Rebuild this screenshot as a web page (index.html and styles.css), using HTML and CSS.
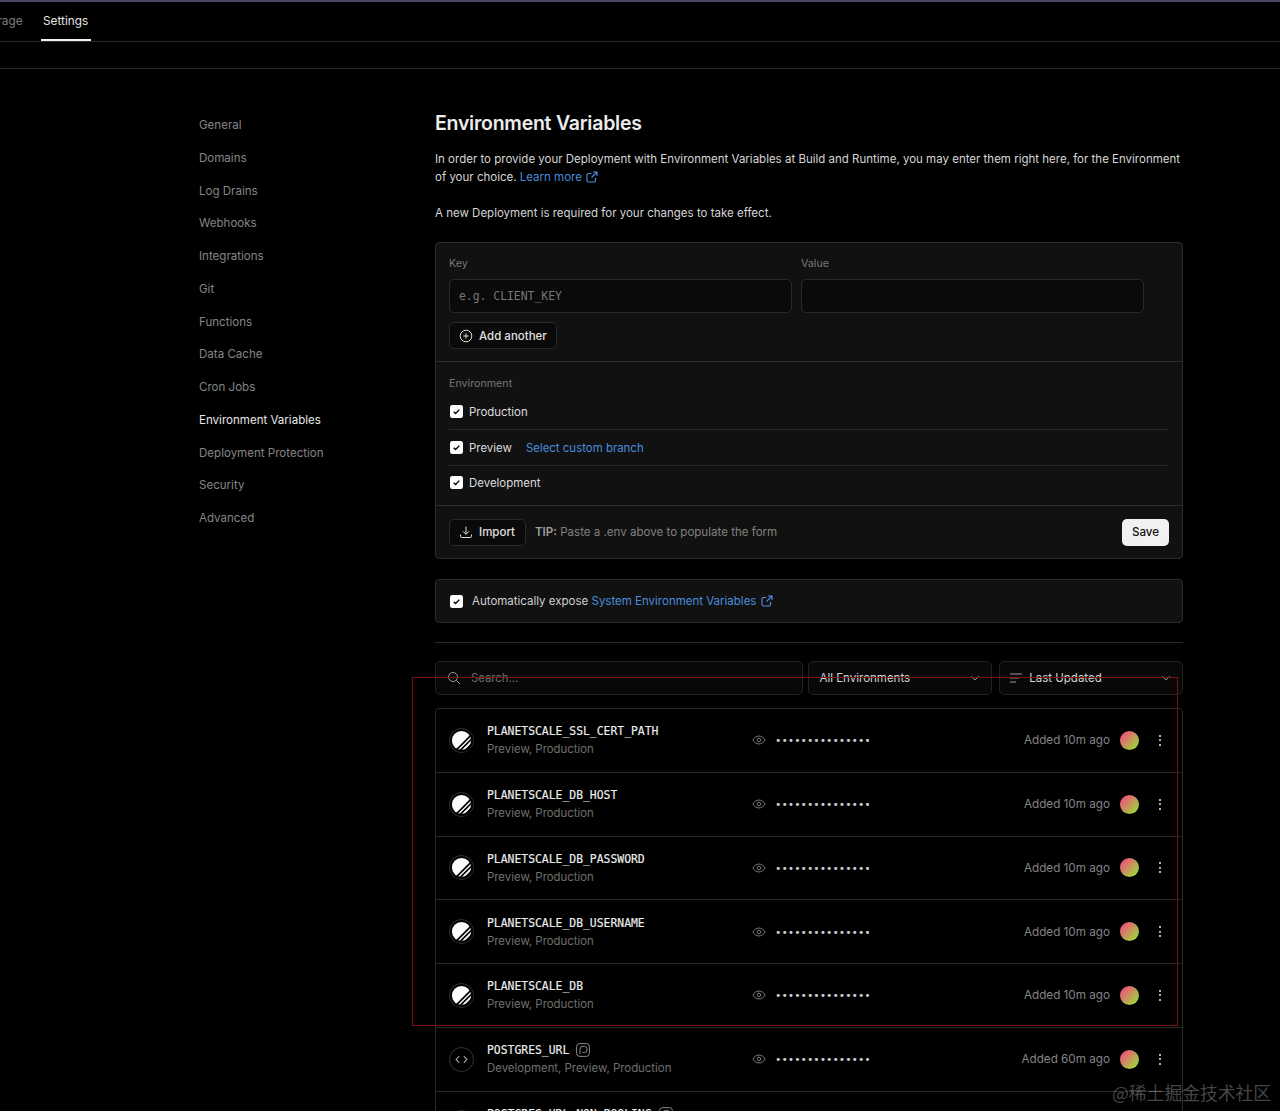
FILE: index.html
```html
<!DOCTYPE html>
<html lang="en">
<head>
<meta charset="utf-8">
<title>Environment Variables</title>
<link rel="stylesheet" href="styles.css">
</head>
<body>
<svg class="defs" width="0" height="0" aria-hidden="true">
  <symbol id="ps" viewBox="0 0 24 24">
    <circle cx="12" cy="12" r="10" fill="#fff"/>
    <path d="M3.500 25 25 3.500" stroke="#000" stroke-width="1.800" fill="none"/>
    <path d="M8 25 25 8" stroke="#000" stroke-width="1.800" fill="none"/>
    <path d="M13 24 24 13 24 24Z" fill="#000"/>
  </symbol>
  <symbol id="code" viewBox="0 0 24 24">
    <path d="M9.6 8.6 6.4 12l3.2 3.4M14.4 8.6l3.2 3.4-3.2 3.4" fill="none" stroke="#bbb" stroke-width="1.1"/>
  </symbol>
  <symbol id="eye" viewBox="0 0 16 16">
    <path d="M1 8c1.8-3 4.2-4.5 7-4.5S13.200 5 15 8c-1.800 3-4.200 4.500-7 4.500S2.800 11 1 8Z" fill="none" stroke="#8a8a8a" stroke-width="1"/>
    <circle cx="8" cy="8" r="2" fill="none" stroke="#8a8a8a" stroke-width="1"/>
  </symbol>
  <symbol id="check" viewBox="0 0 14 14">
    <rect x="0" y="0" width="14" height="14" rx="2.500" fill="#fff"/>
    <path d="M4 7.200 6.100 9.200 10 5" fill="none" stroke="#000" stroke-width="1.500"/>
  </symbol>
  <symbol id="ext" viewBox="0 0 12 12">
    <path d="M9.500 6.800v2.700a1.500 1.500 0 0 1-1.500 1.500H2.500A1.500 1.500 0 0 1 1 9.500V4a1.500 1.500 0 0 1 1.500-1.500h2.700M7 1h4v4M11 1 5.500 6.500" fill="none" stroke="#4f93e6" stroke-width="1.100"/>
  </symbol>
  <symbol id="chev" viewBox="0 0 12 12">
    <path d="M2 4.200 6 8l4-3.800" fill="none" stroke="#8f8f8f" stroke-width="1"/>
  </symbol>
  <symbol id="pg" viewBox="0 0 14 14">
    <rect x=".6" y=".6" width="12.800" height="12.800" rx="3" fill="none" stroke="#8a8a8a" stroke-width="1"/>
    <path d="M4 11V6.500A3 3 0 0 1 7 3.300h1.500A2.700 2.700 0 0 1 11 6v1a2.500 2.500 0 0 1-2.500 2.500H6.500" fill="none" stroke="#8a8a8a" stroke-width="1"/>
  </symbol>
</svg>

<div class="page">
  <header class="topbar">
    <nav class="tabs">
      <a class="tab tab-clipped">Storage</a>
      <a class="tab tab-active">Settings</a>
    </nav>
  </header>
  <div class="subbar"></div>

  <div class="layout">
    <nav class="side">
      <a class="side-item">General</a>
      <a class="side-item">Domains</a>
      <a class="side-item">Log Drains</a>
      <a class="side-item">Webhooks</a>
      <a class="side-item">Integrations</a>
      <a class="side-item">Git</a>
      <a class="side-item">Functions</a>
      <a class="side-item">Data Cache</a>
      <a class="side-item">Cron Jobs</a>
      <a class="side-item side-active">Environment Variables</a>
      <a class="side-item">Deployment Protection</a>
      <a class="side-item">Security</a>
      <a class="side-item">Advanced</a>
    </nav>

    <main class="content">
      <h1 class="title">Environment Variables</h1>
      <p class="lead">In order to provide your Deployment with Environment Variables at Build and Runtime, you may enter them right here, for the Environment of your choice. <a class="link">Learn more <svg class="ext"><use href="#ext"/></svg></a></p>
      <p class="lead lead-second">A new Deployment is required for your changes to take effect.</p>

      <section class="panel form">
        <div class="form-top">
          <div class="fields">
            <label class="field">
              <span class="label">Key</span>
              <span class="input mono-ph">e.g. CLIENT_KEY</span>
            </label>
            <label class="field">
              <span class="label">Value</span>
              <span class="input"></span>
            </label>
          </div>
          <button class="btn btn-add">
            <svg class="btn-icon" viewBox="0 0 14 14"><circle cx="7" cy="7" r="5.800" fill="none" stroke="#ddd" stroke-width="1"/><path d="M7 4.300v5.400M4.300 7h5.400" stroke="#ddd" stroke-width="1"/></svg>
            <span class="btn-text">Add another</span>
          </button>
        </div>
        <div class="form-env">
          <div class="label env-label">Environment</div>
          <div class="env-row"><svg class="check"><use href="#check"/></svg><span>Production</span></div>
          <div class="env-row"><svg class="check"><use href="#check"/></svg><span>Preview</span><a class="link env-link">Select custom branch</a></div>
          <div class="env-row env-last"><svg class="check"><use href="#check"/></svg><span>Development</span></div>
        </div>
        <div class="form-foot">
          <button class="btn btn-import">
            <svg class="btn-icon" viewBox="0 0 14 14"><path d="M7 1.500v7.500M4 6.300 7 9.300l3-3M1.500 9.500v1.700a1.300 1.300 0 0 0 1.300 1.300h8.400a1.300 1.300 0 0 0 1.300-1.300V9.500" fill="none" stroke="#ddd" stroke-width="1"/></svg>
            <span class="btn-text">Import</span>
          </button>
          <span class="tip"><b>TIP:</b> Paste a .env above to populate the form</span>
          <button class="btn-save">Save</button>
        </div>
      </section>

      <section class="panel auto">
        <svg class="check"><use href="#check"/></svg>
        <span class="auto-text">Automatically expose <a class="link">System Environment Variables <svg class="ext"><use href="#ext"/></svg></a></span>
      </section>

      <hr class="rule">

      <div class="filters">
        <div class="ctl search">
          <svg class="search-icon" viewBox="0 0 14 14"><circle cx="6" cy="6" r="4.500" fill="none" stroke="#999" stroke-width="1"/><path d="M9.300 9.300 13 13" stroke="#999" stroke-width="1"/></svg>
          <span class="search-ph">Search...</span>
        </div>
        <div class="ctl select">
          <span>All Environments</span>
          <svg class="chev"><use href="#chev"/></svg>
        </div>
        <div class="ctl select">
          <svg class="sort" viewBox="0 0 12 10"><path d="M0 1h12M0 5h9M0 9h6" stroke="#999" stroke-width="1"/></svg>
          <span>Last Updated</span>
          <svg class="chev"><use href="#chev"/></svg>
        </div>
      </div>

      <section class="list">
        <div class="row"><span class="logo"><svg class="logo-ps"><use href="#ps"/></svg></span><div class="name-col"><div class="name">PLANETSCALE_SSL_CERT_PATH</div><div class="envs">Preview, Production</div></div><svg class="eye"><use href="#eye"/></svg><span class="dots">•••••••••••••••</span><div class="meta"><span class="time">Added 10m ago</span><span class="avatar"></span><span class="kebab"><i></i><i></i><i></i></span></div></div>
        <div class="row"><span class="logo"><svg class="logo-ps"><use href="#ps"/></svg></span><div class="name-col"><div class="name">PLANETSCALE_DB_HOST</div><div class="envs">Preview, Production</div></div><svg class="eye"><use href="#eye"/></svg><span class="dots">•••••••••••••••</span><div class="meta"><span class="time">Added 10m ago</span><span class="avatar"></span><span class="kebab"><i></i><i></i><i></i></span></div></div>
        <div class="row"><span class="logo"><svg class="logo-ps"><use href="#ps"/></svg></span><div class="name-col"><div class="name">PLANETSCALE_DB_PASSWORD</div><div class="envs">Preview, Production</div></div><svg class="eye"><use href="#eye"/></svg><span class="dots">•••••••••••••••</span><div class="meta"><span class="time">Added 10m ago</span><span class="avatar"></span><span class="kebab"><i></i><i></i><i></i></span></div></div>
        <div class="row"><span class="logo"><svg class="logo-ps"><use href="#ps"/></svg></span><div class="name-col"><div class="name">PLANETSCALE_DB_USERNAME</div><div class="envs">Preview, Production</div></div><svg class="eye"><use href="#eye"/></svg><span class="dots">•••••••••••••••</span><div class="meta"><span class="time">Added 10m ago</span><span class="avatar"></span><span class="kebab"><i></i><i></i><i></i></span></div></div>
        <div class="row"><span class="logo"><svg class="logo-ps"><use href="#ps"/></svg></span><div class="name-col"><div class="name">PLANETSCALE_DB</div><div class="envs">Preview, Production</div></div><svg class="eye"><use href="#eye"/></svg><span class="dots">•••••••••••••••</span><div class="meta"><span class="time">Added 10m ago</span><span class="avatar"></span><span class="kebab"><i></i><i></i><i></i></span></div></div>
        <div class="row"><span class="logo logo-line"><svg class="logo-code"><use href="#code"/></svg></span><div class="name-col"><div class="name">POSTGRES_URL <svg class="pg"><use href="#pg"/></svg></div><div class="envs">Development, Preview, Production</div></div><svg class="eye"><use href="#eye"/></svg><span class="dots">•••••••••••••••</span><div class="meta"><span class="time">Added 60m ago</span><span class="avatar"></span><span class="kebab"><i></i><i></i><i></i></span></div></div>
        <div class="row"><span class="logo logo-line"><svg class="logo-code"><use href="#code"/></svg></span><div class="name-col"><div class="name">POSTGRES_URL_NON_POOLING <svg class="pg"><use href="#pg"/></svg></div><div class="envs">Development, Preview, Production</div></div></div>
      </section>
    </main>
  </div>

  <div class="annotation"></div>
  <div class="watermark">@稀土掘金技术社区</div>
</div>
</body>
</html>
```
FILE: styles.css
```css
* { box-sizing: border-box; }
html, body { margin: 0; padding: 0; background: #000; }
body { font-family: Inter, "Liberation Sans", sans-serif; color: #ededed; font-size: 11.5px; }
.defs { position: absolute; }
.page { position: relative; width: 1280px; height: 1111px; overflow: hidden; background: #000; }

.topbar { height: 42px; border-top: 2px solid #4a4768; border-bottom: 1px solid #2b2b2b; }
.tabs { display: flex; height: 39px; margin-left: -24px; gap: 16px; }
.tab { display: block; padding: 11px 3px 0; line-height: 16px; color: #7d7d7d; height: 39px; font-size: 11.8px; }
.tab-clipped { width: 49px; }
.tab-active { color: #e4e4e4; border-bottom: 2px solid #f2f2f2; width: 50px; padding-left: 2px; }
.subbar { height: 27px; border-bottom: 1px solid #2b2b2b; }

.layout { display: flex; padding: 40px 0 0 199px; }
.side { width: 236px; flex: none; display: flex; flex-direction: column; }
.side-item { height: 32.75px; line-height: 32px; color: #858585; font-size: 11.55px; }
.side-active { color: #e6e6e6; }

.content { width: 748px; flex: none; }
.title { margin: 0; font-size: 19.5px; line-height: 28px; font-weight: 600; letter-spacing: -.25px; color: #ececec; }
.lead { margin: 13px 0 0; font-size: 11.5px; line-height: 18px; color: #d6d6d6; }
.lead-second { margin-top: 18px; }
.link { color: #4a8ddc; }
.ext { width: 12px; height: 12px; vertical-align: -2px; margin-left: 1px; }

.panel { background: #111; border: 1px solid #2c2c2c; border-radius: 4px; }
.form { margin-top: 20px; }
.form-top { padding: 13px 13px 12px; border-bottom: 1px solid #2c2c2c; }
.fields { display: flex; gap: 9px; padding-right: 25px; }
.field { flex: 1; display: block; }
.label { display: block; font-size: 10.7px; line-height: 16px; color: #777; }
.input { display: block; height: 34px; margin-top: 7px; background: #0a0a0a; border: 1px solid #2a2a2a; border-radius: 5px; }
.mono-ph { font-family: "DejaVu Sans Mono", monospace; font-size: 11.4px; line-height: 32px; padding-left: 9px; color: #777; }
.btn { display: inline-flex; align-items: center; height: 27px; padding: 0 9px; gap: 6px; background: #0a0a0a; border: 1px solid #2a2a2a; border-radius: 5px; color: #e0e0e0; font: 500 11.5px Inter, sans-serif; }
.btn-text { white-space: nowrap; }
.btn-add { margin-top: 9px; width: 108px; }
.btn-icon { width: 14px; height: 14px; flex: none; }
.form-env { padding: 14px 14px 6px 13px; border-bottom: 1px solid #2c2c2c; }
.env-label { margin-bottom: 2px; }
.env-row { display: flex; align-items: center; gap: 6px; height: 36px; border-bottom: 1px solid #2a2a2a; font-size: 11.45px; color: #dcdcdc; }
.env-last { border-bottom: 0; height: 33px; }
.check { width: 13px; height: 13px; flex: none; margin-left: 1px; }
.env-link { margin-left: 8px; }
.form-foot { display: flex; align-items: center; height: 52px; padding: 0 13px; }
.btn-import { width: 77px; }
.tip { margin-left: 9px; color: #808080; font-size: 11.55px; }
.tip b { font-weight: 600; color: #a0a0a0; }
.btn-save { margin-left: auto; width: 47px; height: 27px; background: #f1f1f1; border: 0; border-radius: 5px; color: #111; font: 500 11.6px Inter, sans-serif; }

.auto { display: flex; align-items: center; margin-top: 20px; height: 44px; padding: 0 13px; }
.auto-text { margin-left: 9px; font-size: 11.5px; color: #d0d0d0; }
.rule { margin: 19px 0 0; border: 0; border-top: 1px solid #2a2a2a; }

.filters { display: flex; gap: 5px; margin-top: 18px; }
.ctl { display: flex; align-items: center; height: 34px; background: #080808; border: 1px solid #222; border-radius: 5px; font-size: 11.5px; color: #d6d6d6; }
.search { width: 369px; padding-left: 11px; }
.search-icon { width: 14px; height: 14px; }
.search-ph { margin-left: 10px; color: #6f6f6f; font-size: 11.3px; }
.select { width: 184px; padding: 0 10px; gap: 7px; }
.select .chev { margin-left: auto; width: 12px; height: 12px; }
.sort { width: 12px; height: 10px; flex: none; }
.select:last-child { margin-left: 2px; }

.list { margin-top: 13px; border: 1px solid #2a2a2a; border-radius: 4px 4px 0 0; background: #000; }
.row { display: flex; align-items: center; height: 63.75px; padding: 0 13px; border-bottom: 1px solid #2a2a2a; }
.logo { display: flex; align-items: center; justify-content: center; width: 25px; height: 25px; flex: none; border-radius: 50%; border: 1px solid #333; overflow: hidden; }
.logo-ps { width: 23px; height: 23px; }
.logo-code { width: 23px; height: 23px; }
.name-col { width: 265px; margin-left: 13px; flex: none; }
.name { font-family: "DejaVu Sans Mono", monospace; font-size: 11.4px; line-height: 18px; color: #eee; display: flex; align-items: center; gap: 7px; -webkit-text-stroke: .15px #eee; }
.envs { font-size: 11.4px; line-height: 18px; color: #707070; }
.pg { width: 14px; height: 14px; }
.eye { width: 14px; height: 14px; flex: none; }
.dots { margin-left: 9px; font-family: "DejaVu Sans Mono", monospace; font-size: 10.600px; color: #cfcfcf; }
.meta { margin-left: auto; display: flex; align-items: center; }
.time { color: #858585; font-size: 11.7px; }
.avatar { width: 19px; height: 19px; margin-left: 10px; border-radius: 50%; background: linear-gradient(135deg, #f0567a 15%, #9fd13a 85%); }
.kebab { display: flex; flex-direction: column; align-items: center; gap: 2.5px; width: 18px; margin-left: 12px; }
.kebab i { display: block; width: 2px; height: 2px; border-radius: 50%; background: #eee; }

.annotation { position: absolute; left: 412px; top: 677px; width: 766px; height: 349px; border: 1px solid #7b1212; pointer-events: none; }
.watermark { position: absolute; left: 1112px; top: 1079px; font-family: "Noto Sans CJK SC", sans-serif; font-size: 17.800px; line-height: 26px; color: rgba(255,255,255,.28); white-space: nowrap; }
```
